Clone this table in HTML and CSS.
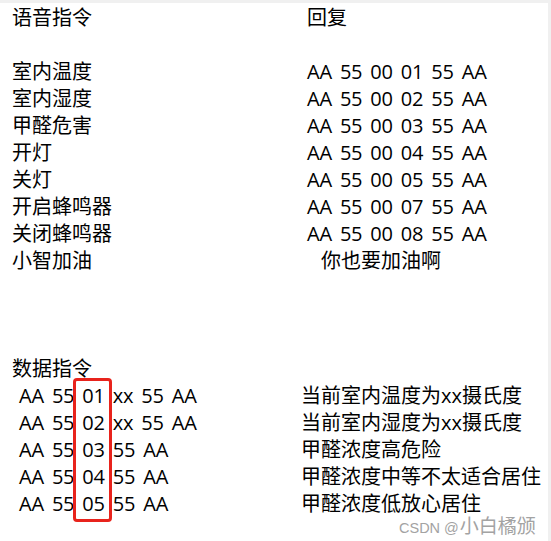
FILE: index.html
```html
<!DOCTYPE html>
<html lang="zh-CN">
<head>
<meta charset="utf-8">
<title>指令表</title>
<link rel="stylesheet" href="styles.css">
</head>
<body>
<div class="panel">
  <div class="table voice">
    <div>语音指令</div><div>回复</div>
    <div class="blank"></div><div class="blank"></div>
    <div>室内温度</div><div class="hex">AA 55 00 01 55 AA</div>
    <div>室内湿度</div><div class="hex">AA 55 00 02 55 AA</div>
    <div>甲醛危害</div><div class="hex">AA 55 00 03 55 AA</div>
    <div>开灯</div><div class="hex">AA 55 00 04 55 AA</div>
    <div>关灯</div><div class="hex">AA 55 00 05 55 AA</div>
    <div>开启蜂鸣器</div><div class="hex">AA 55 00 07 55 AA</div>
    <div>关闭蜂鸣器</div><div class="hex">AA 55 00 08 55 AA</div>
    <div>小智加油</div><div class="indent">你也要加油啊</div>
  </div>
  <div class="gap"></div>
  <div class="title">数据指令</div>
  <div class="table data">
    <div class="hex lead">AA 55 01 xx 55 AA</div><div>当前室内温度为xx摄氏度</div>
    <div class="hex lead">AA 55 02 xx 55 AA</div><div>当前室内湿度为xx摄氏度</div>
    <div class="hex lead">AA 55 03 55 AA</div><div>甲醛浓度高危险</div>
    <div class="hex lead">AA 55 04 55 AA</div><div>甲醛浓度中等不太适合居住</div>
    <div class="hex lead">AA 55 05 55 AA</div><div>甲醛浓度低放心居住</div>
  </div>
  <div class="mark"></div>
  <div class="watermark">CSDN @<span class="wm-cjk">小白橘颁</span></div>
</div>
</body>
</html>
```

FILE: styles.css
```css
html, body {
  margin: 0;
  padding: 0;
}
body {
  background: #f0f0f0;
  font-family: "Segoe UI", "Open Sans", "Noto Sans CJK SC", sans-serif;
  font-size: 20px;
  line-height: 27px;
  color: #000;
}
.panel {
  position: relative;
  margin-top: 3px;
  width: 548px;
  height: 538px;
  background: #fff;
  padding: 1px 0 0 12px;
  box-sizing: border-box;
}
.table {
  display: grid;
}
.voice {
  grid-template-columns: 295px 1fr;
}
.data {
  grid-template-columns: 289px 1fr;
}
.blank {
  height: 27px;
}
.gap {
  height: 81px;
}
.hex {
  font-family: "Open Sans", "Noto Sans CJK SC", sans-serif;
  letter-spacing: -0.2px;
  word-spacing: 3px;
}
.lead {
  padding-left: 7px;
}
.indent {
  padding-left: 14px;
}
.mark {
  position: absolute;
  left: 73px;
  top: 375px;
  width: 33px;
  height: 138px;
  border: 3px solid #e8231c;
  border-radius: 4px;
}
.watermark {
  position: absolute;
  left: 399px;
  top: 511px;
  font-size: 14.5px;
  line-height: 22px;
  color: #a3a3a3;
  font-family: "Liberation Sans", Arial, sans-serif;
  text-shadow: 0 0 1px #fff;
  white-space: nowrap;
}
.wm-cjk {
  font-family: "Noto Sans CJK SC", sans-serif;
  font-size: 19px;
  margin-left: 1px;
}
```
